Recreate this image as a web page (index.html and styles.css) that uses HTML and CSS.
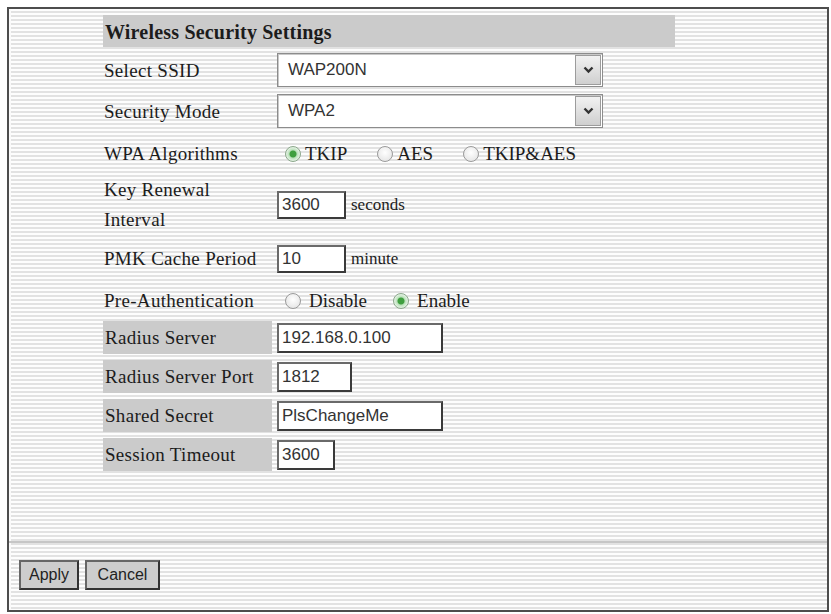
FILE: index.html
```html
<!DOCTYPE html>
<html lang="en">
  <head>
    <meta charset="UTF-8" />
    <title>Wireless Security Settings</title>
    <link rel="stylesheet" href="styles.css">
  </head>
  <body>
    <div class="frame">
      <form class="settings" autocomplete="off">
        <div class="grid">
          <div class="head">Wireless Security Settings</div>

          <div class="lbl">Select SSID</div>
          <div class="field top">
            <div class="select">
              <span class="select-value">WAP200N</span>
              <span class="select-arrow">
                <svg width="11" height="8" viewBox="0 0 11 8"><polyline points="1.5,1.5 5.5,5.5 9.5,1.5" fill="none" stroke="#333" stroke-width="2.4" /></svg>
              </span>
            </div>
          </div>

          <div class="lbl">Security Mode</div>
          <div class="field top">
            <div class="select">
              <span class="select-value">WPA2</span>
              <span class="select-arrow">
                <svg width="11" height="8" viewBox="0 0 11 8"><polyline points="1.5,1.5 5.5,5.5 9.5,1.5" fill="none" stroke="#333" stroke-width="2.4" /></svg>
              </span>
            </div>
          </div>

          <div class="lbl">WPA Algorithms</div>
          <div class="field radios">
            <label class="opt"><input type="radio" name="algo" checked> TKIP</label>
            <label class="opt"><input type="radio" name="algo"> AES</label>
            <label class="opt"><input type="radio" name="algo"> TKIP&amp;AES</label>
          </div>

          <div class="lbl tall">Key Renewal<br>Interval</div>
          <div class="field">
            <input type="text" class="txt w-short" value="3600"> <span class="unit">seconds</span>
          </div>

          <div class="lbl">PMK Cache Period</div>
          <div class="field">
            <input type="text" class="txt w-short" value="10"> <span class="unit">minute</span>
          </div>

          <div class="lbl">Pre-Authentication</div>
          <div class="field radios wide">
            <label class="opt"><input type="radio" name="preauth"> Disable</label>
            <label class="opt"><input type="radio" name="preauth" checked> Enable</label>
          </div>

          <div class="lbl shaded">Radius Server</div>
          <div class="field">
            <input type="text" class="txt big w-long" value="192.168.0.100">
          </div>

          <div class="lbl shaded">Radius Server Port</div>
          <div class="field">
            <input type="text" class="txt big w-port" value="1812">
          </div>

          <div class="lbl shaded">Shared Secret</div>
          <div class="field">
            <input type="text" class="txt big w-long" value="PlsChangeMe">
          </div>

          <div class="lbl shaded">Session Timeout</div>
          <div class="field">
            <input type="text" class="txt big w-time" value="3600">
          </div>
        </div>
      </form>
      <div class="actions">
        <button type="button" class="btn apply">Apply</button>
        <button type="button" class="btn cancel">Cancel</button>
      </div>
    </div>
  </body>
</html>
```

FILE: styles.css
```css
/* Reset */
* {
  margin: 0;
  padding: 0;
  box-sizing: border-box;
}
body {
  background: #fff;
  font-family: "Liberation Serif", "Times New Roman", serif;
  color: #1c1c1c;
}
/* outer panel with striped background */
.frame {
  margin: 7px 2px 2px 7px;
  height: 605px;
  border: 2px solid #4d4d4d;
  background: repeating-linear-gradient(
    to bottom,
    #fdfdfd 0,
    #fdfdfd 2px,
    #e2e2e2 2px,
    #e2e2e2 4px
  );
  box-shadow: inset 2px 0 0 #fafafa;
  display: flex;
  flex-direction: column;
}
.settings {
  height: 532px;
  padding: 6px 0 0 94px;
}
.grid {
  display: grid;
  width: 572px;
  grid-template-columns: 169px 398px;
  grid-template-rows: 32px 35px 35px 38px 52px 44px 28px 33px 33px 33px 33px;
  column-gap: 5px;
  row-gap: 6px;
}
.head {
  grid-column: 1 / 3;
  background: #cbcbcb;
  font-weight: bold;
  font-size: 20px;
  letter-spacing: 0.2px;
  padding: 2px 0 0 2px;
  display: flex;
  align-items: center;
}
.lbl {
  font-size: 19px;
  letter-spacing: 0.3px;
  display: flex;
  align-items: center;
  padding-left: 1px;
  white-space: nowrap;
}
.lbl.tall {
  line-height: 30px;
}
.lbl.shaded {
  background: #cbcbcb;
  padding-left: 2px;
}
.field {
  display: flex;
  align-items: center;
}
.field.top {
  align-items: flex-start;
}
/* drop-down box */
.select {
  width: 326px;
  height: 34px;
  border: 1px solid #8c8c8c;
  box-shadow: inset 1px 1px 0 #c9c9c9;
  background: #fff;
  display: flex;
  align-items: stretch;
}
.select-value {
  flex: 1;
  font-family: "Liberation Sans", Arial, sans-serif;
  font-size: 17px;
  color: #333;
  padding-left: 10px;
  display: flex;
  align-items: center;
}
.select-arrow {
  width: 26px;
  margin: 1px;
  border: 1px solid #9c9c9c;
  background: linear-gradient(#f2f2f2, #cfcfcf);
  display: flex;
  align-items: center;
  justify-content: center;
}
/* radio groups */
.radios {
  padding-left: 8px;
  gap: 30px;
  font-size: 19px;
}
.radios.wide {
  gap: 26px;
}
.opt {
  display: flex;
  align-items: center;
  gap: 4px;
}
.radios.wide .opt {
  gap: 8px;
}
input[type="radio"] {
  appearance: none;
  width: 16px;
  height: 16px;
  border-radius: 50%;
  border: 1px solid #9a9a9a;
  background: radial-gradient(circle at 50% 40%, #ffffff 0, #e9e9e9 70%);
}
input[type="radio"]:checked {
  border-color: #8ba78b;
  background: radial-gradient(
    circle,
    #3f9f3f 0,
    #3f9f3f 3px,
    #b9e0b9 4px,
    #e6f3e6 7px
  );
}
/* text boxes */
.txt {
  height: 28px;
  border: 2px solid;
  border-color: #6a6a6a #3a3a3a #3a3a3a #6a6a6a;
  background: #fff;
  font-family: "Liberation Sans", Arial, sans-serif;
  font-size: 17px;
  color: #333;
  padding: 0 3px;
  outline: none;
}
.txt.big {
  height: 30px;
}
.w-short {
  width: 69px;
}
.w-long {
  width: 166px;
}
.w-port {
  width: 75px;
}
.w-time {
  width: 58px;
}
.unit {
  font-size: 17px;
  margin-left: 5px;
}
/* bottom button bar */
.actions {
  border-top: 2px solid #c6c6c6;
  padding: 17px 0 0 10px;
  display: flex;
  gap: 6px;
}
.btn {
  height: 30px;
  background: #cdcdcd;
  border: 2px solid;
  border-color: #666 #333 #333 #666;
  font-family: "Liberation Sans", Arial, sans-serif;
  font-size: 16px;
  color: #222;
}
.btn.apply {
  width: 60px;
}
.btn.cancel {
  width: 75px;
}
```
